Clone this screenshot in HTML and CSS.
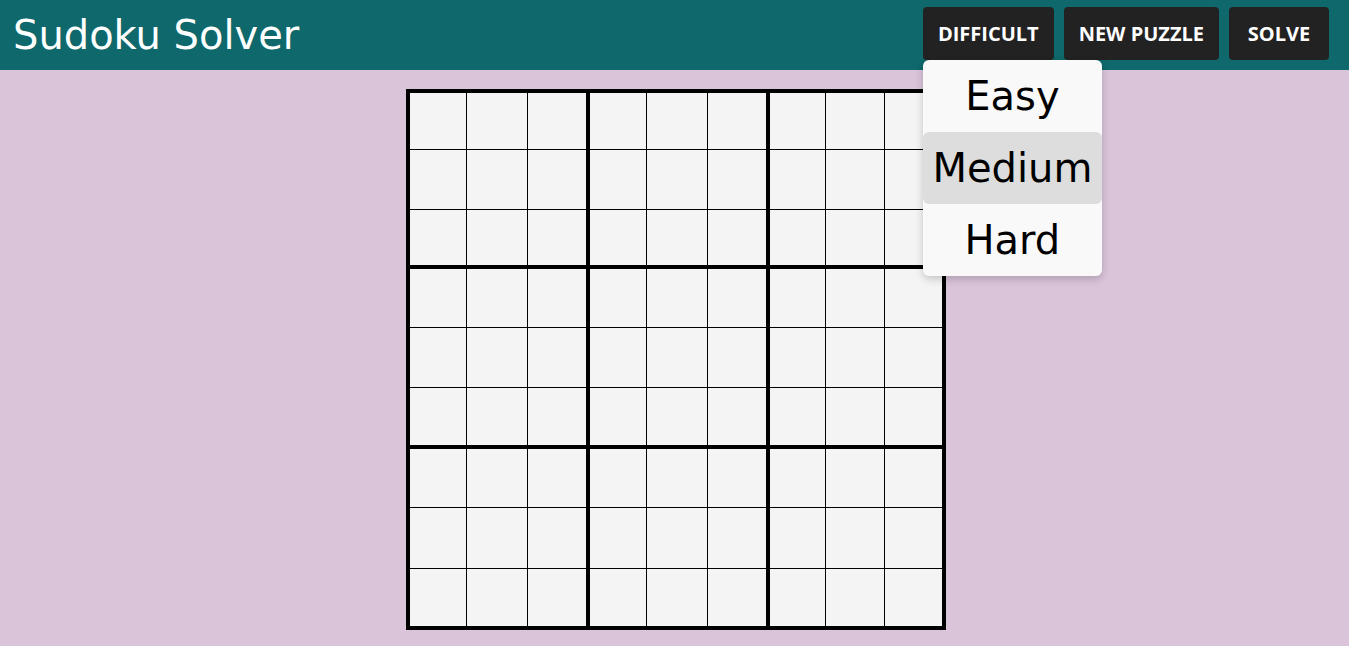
FILE: index.html
```html
<!DOCTYPE html>
<html lang="en">
<head>
<meta charset="utf-8">
<title>Sudoku Solver</title>
<link rel="stylesheet" href="styles.css">
</head>
<body>
<header class="topbar">
  <h1 class="title">Sudoku Solver</h1>
  <nav class="actions">
    <div class="menu-wrap">
      <button class="btn">DIFFICULT</button>
      <ul class="menu">
        <li class="menu-item">Easy</li>
        <li class="menu-item is-active">Medium</li>
        <li class="menu-item">Hard</li>
      </ul>
    </div>
    <button class="btn">NEW PUZZLE</button>
    <button class="btn">SOLVE</button>
  </nav>
</header>
<main class="main">
  <div class="board" id="board"></div>
</main>
<script src="app.js"></script>
</body>
</html>
```

FILE: app.js
```js
const board = document.getElementById('board');
for (let b = 0; b < 9; b++) {
  const box = document.createElement('div');
  box.className = 'box';
  for (let c = 0; c < 9; c++) {
    const cell = document.createElement('div');
    cell.className = 'cell';
    box.appendChild(cell);
  }
  board.appendChild(box);
}
```

FILE: styles.css
```css
* { box-sizing: border-box; }
html, body { margin: 0; padding: 0; }
body {
  background: #dac4da;
  font-family: "DejaVu Sans", Verdana, sans-serif;
  min-height: 646px;
}
.topbar {
  height: 70px;
  background: #0f686b;
  display: flex;
  align-items: center;
  justify-content: space-between;
  padding: 0 20px 0 13px;
}
.title {
  margin: 0;
  color: #ffffff;
  font-weight: 400;
  font-size: 40px;
  line-height: 1;
}
.actions {
  display: flex;
  gap: 10px;
  align-items: center;
  margin-top: -4px;
}
.menu-wrap { position: relative; }
.btn {
  height: 53px;
  min-width: 100px;
  padding: 0 15px;
  border: 0;
  border-radius: 4px;
  background: #222222;
  color: #ffffff;
  font-family: "Open Sans", "Noto Sans", sans-serif;
  font-weight: 700;
  font-size: 20px;
  cursor: pointer;
}
.menu {
  position: absolute;
  top: 53px;
  left: 0;
  width: 179px;
  margin: 0;
  padding: 0;
  list-style: none;
  background: #f9f9f9;
  border-radius: 6px;
  box-shadow: 0 3px 8px rgba(0,0,0,0.2);
  z-index: 10;
}
.menu-item {
  height: 72px;
  display: flex;
  align-items: center;
  justify-content: center;
  font-size: 40px;
  color: #000;
  border-radius: 6px;
}
.menu-item.is-active { background: #dddddd; }
.main {
  display: flex;
  justify-content: center;
  padding: 19px 0 0 3px;
}
.board {
  width: 540px;
  height: 541px;
  background: #000;
  padding: 4px;
  display: grid;
  grid-template-columns: 176fr 176fr 172fr;
  grid-template-rows: 172fr 176fr 177fr;
  gap: 4px;
}
.box {
  display: grid;
  grid-template-columns: 56fr 59fr 58fr;
  grid-template-rows: 57fr 59fr 56fr;
  gap: 1px;
}
.cell { background: #f4f4f4; }
```
